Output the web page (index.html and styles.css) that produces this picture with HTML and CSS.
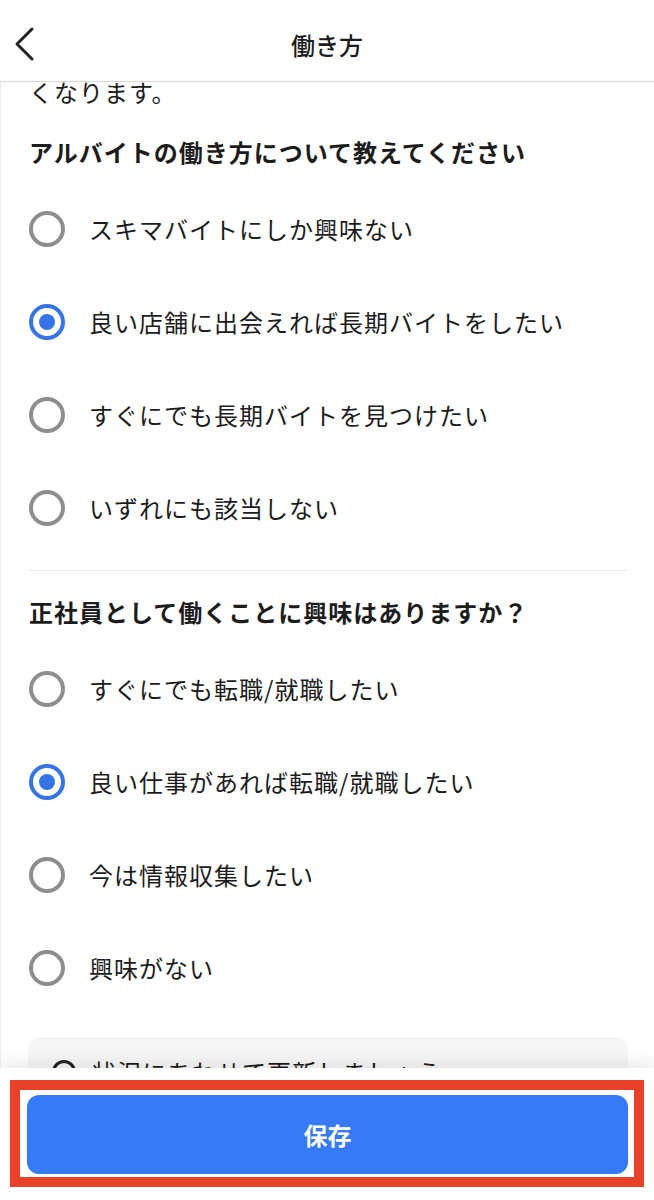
FILE: index.html
```html
<!DOCTYPE html>
<html lang="ja">
<head>
    <meta charset="UTF-8">
    <title>働き方</title>
    <link rel="stylesheet" href="styles.css">
</head>
<body>
<div class="header">
    <span class="back">
        <svg width="24" height="36" viewBox="0 0 24 36"><polyline points="18,3 3,18 18,33" fill="none" stroke="#222" stroke-width="3" stroke-linecap="round" stroke-linejoin="round"/></svg>
    </span>
    <h1 class="title">働き方</h1>
</div>

<div class="page">
    <p class="intro">くなります。</p>

    <!--アルバイト-->
    <h2 class="question">アルバイトの働き方について教えてください</h2>
    <ul class="options">
        <li class="option"><span class="radio"></span>スキマバイトにしか興味ない</li>
        <li class="option"><span class="radio checked"></span>良い店舗に出会えれば長期バイトをしたい</li>
        <li class="option"><span class="radio"></span>すぐにでも長期バイトを見つけたい</li>
        <li class="option"><span class="radio"></span>いずれにも該当しない</li>
    </ul>

    <hr class="divider">

    <!--正社員-->
    <h2 class="question">正社員として働くことに興味はありますか？</h2>
    <ul class="options">
        <li class="option"><span class="radio"></span>すぐにでも転職/就職したい</li>
        <li class="option"><span class="radio checked"></span>良い仕事があれば転職/就職したい</li>
        <li class="option"><span class="radio"></span>今は情報収集したい</li>
        <li class="option"><span class="radio"></span>興味がない</li>
    </ul>

    <div class="notice">
        <span class="notice-icon"></span>
        <span>状況にあわせて更新しましょう</span>
    </div>
</div>

<div class="footer">
    <button class="save">保存</button>
    <div class="highlight"></div>
</div>
</body>
</html>
```

FILE: styles.css
```css
* {
    margin: 0;
    padding: 0;
    box-sizing: border-box;
}

ul {
    list-style: none
}

body {
    width: 654px;
    height: 1200px;
    overflow: hidden;
    background: #fff;
    color: #1c1c1c;
    font-family: "Noto Sans CJK JP", "Noto Sans", sans-serif;
    font-size: 24px;
    letter-spacing: 1px;
    border-left: 1px solid #eee;
}

.header {
    position: fixed;
    top: 0;
    left: 0;
    width: 654px;
    height: 82px;
    background: #fff;
    border-bottom: 1px solid #d8d8d8;
    display: flex;
    align-items: center;
    justify-content: center;
    z-index: 2;
}

.back {
    position: absolute;
    left: 14px;
    top: 26px;
    display: flex;
}

.title {
    font-size: 24px;
    font-weight: 500;
    line-height: 34px;
    padding-top: 8px;
    letter-spacing: 0;
}

.page {
    padding: 75px 26px 0 27px;
}

.intro {
    line-height: 34px;
    padding-left: 1px;
}

.question {
    margin-top: 26px;
    font-size: 24px;
    font-weight: bold;
    line-height: 34px;
    padding-left: 1px;
}

.options {
    margin-top: 13px;
}

.option {
    height: 93px;
    display: flex;
    align-items: center;
    gap: 24px;
    line-height: 34px;
}

.radio {
    width: 36px;
    height: 36px;
    margin-left: 1px;
    border: 4px solid #8e8e8e;
    border-radius: 50%;
    display: flex;
    align-items: center;
    justify-content: center;
    flex-shrink: 0;
}

.radio.checked {
    border-color: #3673e6;
}

.radio.checked::after {
    content: "";
    width: 16px;
    height: 16px;
    border-radius: 50%;
    background: #3673e6;
}

.divider {
    margin-top: 16px;
    border: 0;
    border-top: 1px solid #ececec;
}

.divider + .question {
    margin-top: 24px;
}

.notice {
    margin-top: 23px;
    background: #f6f6f6;
    border-radius: 12px;
    padding: 18px 20px 40px 24px;
    display: flex;
    align-items: center;
    gap: 16px;
    line-height: 34px;
}

.notice-icon {
    width: 24px;
    height: 24px;
    border: 3px solid #222;
    border-radius: 50%;
}

.footer {
    position: fixed;
    left: 0;
    bottom: 0;
    width: 654px;
    height: 132px;
    background: #fff;
    box-shadow: 0 -6px 14px rgba(0, 0, 0, 0.08);
    padding: 27px 26px 26px 27px;
    z-index: 2;
}

.save {
    width: 100%;
    height: 79px;
    border: 0;
    border-radius: 12px;
    background: #367af6;
    color: #fff;
    font-family: "Noto Sans CJK JP", "Noto Sans", sans-serif;
    font-size: 24px;
    font-weight: bold;
}

.highlight {
    position: absolute;
    left: 10px;
    top: 12px;
    width: 634px;
    height: 107px;
    border: 10px solid #e8412a;
}
```
